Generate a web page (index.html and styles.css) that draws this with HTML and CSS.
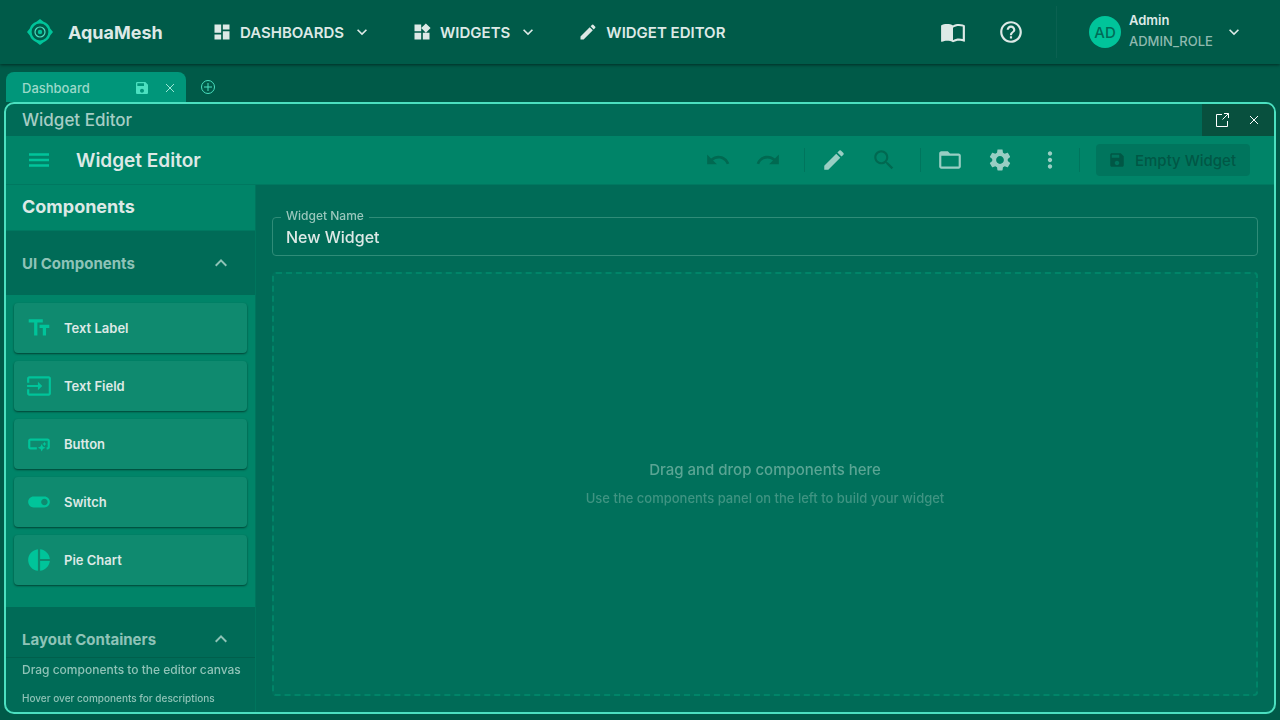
FILE: index.html
```html
<!DOCTYPE html>
<html lang="en">
<head>
<meta charset="utf-8">
<meta name="viewport" content="width=device-width, initial-scale=1">
<title>AquaMesh – Widget Editor</title>
<link rel="stylesheet" href="styles.css">
</head>
<body>
<div class="app">
  <header class="topbar">
    <a class="brand" href="#">
      <svg class="brand-logo" viewBox="0 0 26 26" aria-hidden="true">
        <path fill="#00c49a" fill-rule="evenodd" d="M13 0l3.6 2.8a10.6 10.6 0 0 1 6.6 6.6L26 13l-2.8 3.6a10.6 10.6 0 0 1-6.6 6.6L13 26l-3.6-2.8a10.6 10.6 0 0 1-6.6-6.6L0 13l2.8-3.6a10.6 10.6 0 0 1 6.6-6.6zM13 4.6a8.4 8.4 0 1 0 0 16.8a8.4 8.4 0 1 0 0-16.8z"/>
        <circle cx="13" cy="13" r="5" fill="none" stroke="#4be0c0" stroke-width="1.2"/>
        <circle cx="13" cy="13" r="2.2" fill="#00c49a"/>
      </svg>
      <span>AquaMesh</span>
    </a>
    <nav class="nav">
      <button class="nav-item" type="button">
        <svg class="i20" viewBox="0 0 24 24"><path d="M3 13h8V3H3v10zm0 8h8v-6H3v6zm10 0h8V11h-8v10zm0-18v6h8V3h-8z"/></svg>
        <span>DASHBOARDS</span>
        <svg class="i20 chev" viewBox="0 0 24 24"><path d="M16.59 8.59 12 13.17 7.41 8.59 6 10l6 6 6-6z"/></svg>
      </button>
      <button class="nav-item" type="button">
        <svg class="i20" viewBox="0 0 24 24"><path d="M13 13v8h8v-8h-8zM3 21h8v-8H3v8zM3 3v8h8V3H3zm13.66-1.31L11 7.34 16.66 13l5.66-5.66-5.66-5.65z"/></svg>
        <span>WIDGETS</span>
        <svg class="i20 chev" viewBox="0 0 24 24"><path d="M16.59 8.59 12 13.17 7.41 8.59 6 10l6 6 6-6z"/></svg>
      </button>
      <button class="nav-item" type="button">
        <svg class="i20" viewBox="0 0 24 24"><path d="M3 17.25V21h3.75L17.81 9.94l-3.75-3.75L3 17.25zM20.71 7.04c.39-.39.39-1.02 0-1.41l-2.34-2.34a1 1 0 0 0-1.41 0l-1.83 1.83 3.75 3.75 1.83-1.83z"/></svg>
        <span>WIDGET EDITOR</span>
      </button>
    </nav>
    <div class="top-actions">
      <button class="top-icon" type="button" aria-label="Documentation">
        <svg class="i26" viewBox="0 0 24 24"><path d="M21 5c-1.11-.35-2.33-.5-3.5-.5-1.95 0-4.05.4-5.5 1.5-1.45-1.1-3.55-1.5-5.5-1.5S2.45 4.9 1 6v14.65c0 .25.25.5.5.5.1 0 .15-.05.25-.05C3.1 20.45 5.05 20 6.5 20c1.95 0 4.05.4 5.5 1.5 1.35-.85 3.8-1.5 5.5-1.5 1.65 0 3.35.3 4.75 1.05.1.05.15.05.25.05.25 0 .5-.25.5-.5V6c-.6-.45-1.25-.75-2-1zm0 13.5c-1.1-.35-2.3-.5-3.5-.5-1.7 0-4.15.65-5.5 1.5V8c1.35-.85 3.8-1.5 5.5-1.5 1.2 0 2.4.15 3.5.5v11.5z"/></svg>
      </button>
      <button class="top-icon" type="button" aria-label="Help">
        <svg class="i26" viewBox="0 0 24 24"><path d="M11 18h2v-2h-2v2zm1-16C6.48 2 2 6.48 2 12s4.48 10 10 10 10-4.48 10-10S17.52 2 12 2zm0 18c-4.41 0-8-3.59-8-8s3.59-8 8-8 8 3.59 8 8-3.59 8-8 8zm0-14c-2.21 0-4 1.79-4 4h2c0-1.1.9-2 2-2s2 .9 2 2c0 2-3 1.75-3 5h2c0-2.25 3-2.5 3-5 0-2.21-1.79-4-4-4z"/></svg>
      </button>
      <button class="account" type="button">
        <span class="avatar">AD</span>
        <span class="account-text"><span class="account-name">Admin</span><span class="account-role">ADMIN_ROLE</span></span>
        <svg class="i20" viewBox="0 0 24 24"><path d="M16.59 8.59 12 13.17 7.41 8.59 6 10l6 6 6-6z"/></svg>
      </button>
    </div>
  </header>

  <div class="tabs">
    <div class="tab">
      <span class="tab-title">Dashboard</span>
      <button class="tab-btn" type="button" aria-label="Save dashboard"><svg class="i16" viewBox="0 0 24 24"><path d="M17 3H5c-1.11 0-2 .9-2 2v14c0 1.1.89 2 2 2h14c1.1 0 2-.9 2-2V7l-4-4zm-5 16c-1.66 0-3-1.34-3-3s1.34-3 3-3 3 1.34 3 3-1.34 3-3 3zm3-10H5V5h10v4z"/></svg></button>
      <button class="tab-btn tab-close" type="button" aria-label="Close dashboard"><svg class="i16" viewBox="0 0 16 16"><path class="line" d="M4 4l8 8M12 4l-8 8"/></svg></button>
    </div>
    <button class="tab-add" type="button" aria-label="Add dashboard"><svg class="i16" viewBox="0 0 16 16"><circle class="line" cx="8" cy="8" r="6.5"/><path class="line" d="M8 4v8M4 8h8"/></svg></button>
  </div>

  <main class="window">
    <div class="titlebar">
      <span class="titlebar-text">Widget Editor</span>
      <div class="window-btns">
        <button type="button" aria-label="Open in new window"><svg class="i16" viewBox="0 0 16 16"><path class="line" d="M8 2.5H2.500V14.500H13.500V9M10 1.500H14.500V6M14.500 1.500L8.500 7.500"/></svg></button>
        <button type="button" aria-label="Close"><svg class="i16" viewBox="0 0 16 16"><path class="line" d="M4 4l8 8M12 4l-8 8"/></svg></button>
      </div>
    </div>

    <div class="toolbar">
      <button class="tool menu" type="button" aria-label="Toggle components"><svg class="i24" viewBox="0 0 24 24"><path d="M2 5.300h20v2.400H2zM2 10.800h20v2.400H2zM2 16.300h20v2.400H2z"/></svg></button>
      <h1 class="toolbar-title">Widget Editor</h1>
      <div class="tool-group">
        <button class="tool" type="button" disabled aria-label="Undo"><svg class="i26" viewBox="0 0 24 24"><path d="M12.5 8c-2.65 0-5.05.99-6.9 2.6L2 7v9h9l-3.62-3.62c1.39-1.16 3.16-1.88 5.12-1.88 3.54 0 6.55 2.31 7.6 5.5l2.37-.78C21.08 11.03 17.15 8 12.5 8z"/></svg></button>
        <button class="tool" type="button" disabled aria-label="Redo"><svg class="i26" viewBox="0 0 24 24"><path d="M18.4 10.6C16.55 8.99 14.15 8 11.5 8c-4.65 0-8.58 3.03-9.96 7.22L3.9 16c1.05-3.19 4.05-5.5 7.6-5.5 1.95 0 3.73.72 5.12 1.88L13 16h9V7l-3.6 3.6z"/></svg></button>
      </div>
      <span class="divider"></span>
      <div class="tool-group">
        <button class="tool" type="button" aria-label="Edit mode"><svg class="i26" viewBox="0 0 24 24"><path d="M3 17.25V21h3.75L17.81 9.94l-3.75-3.75L3 17.25zM20.71 7.04c.39-.39.39-1.02 0-1.41l-2.34-2.34a1 1 0 0 0-1.41 0l-1.83 1.83 3.75 3.75 1.83-1.83z"/></svg></button>
        <button class="tool" type="button" disabled aria-label="Search"><svg class="i26" viewBox="0 0 24 24"><path d="M15.500 14h-.79l-.28-.27C15.410 12.590 16 11.110 16 9.500 16 5.910 13.090 3 9.500 3S3 5.910 3 9.500 5.910 16 9.500 16c1.610 0 3.090-.59 4.230-1.570l.27.28v.79l5 4.990L20.490 19l-4.990-5zm-6 0C7.010 14 5 11.990 5 9.500S7.010 5 9.500 5 14 7.010 14 9.500 11.990 14 9.500 14z"/></svg></button>
      </div>
      <span class="divider"></span>
      <div class="tool-group">
        <button class="tool" type="button" aria-label="Open widget"><svg class="i26" viewBox="0 0 24 24"><path d="M20 6h-8l-2-2H4c-1.100 0-1.990.9-1.990 2L2 18c0 1.100.9 2 2 2h16c1.100 0 2-.9 2-2V8c0-1.100-.9-2-2-2zm0 12H4V8h16v10z"/></svg></button>
        <button class="tool" type="button" aria-label="Settings"><svg class="i26" viewBox="0 0 24 24"><path d="M19.140 12.940c.04-.3.06-.61.06-.94 0-.32-.02-.64-.07-.94l2.030-1.580c.18-.14.23-.41.12-.61l-1.920-3.320c-.12-.22-.37-.29-.59-.22l-2.390.96c-.5-.38-1.030-.7-1.620-.94l-.36-2.540c-.04-.24-.24-.41-.48-.41h-3.840c-.24 0-.43.17-.47.41l-.36 2.540c-.59.24-1.130.57-1.620.94l-2.390-.96c-.22-.08-.47 0-.59.22L2.740 8.870c-.12.21-.08.47.12.61l2.030 1.580c-.05.3-.09.63-.09.94s.02.64.07.94l-2.030 1.580c-.18.14-.23.41-.12.61l1.920 3.320c.12.22.37.29.59.22l2.390-.96c.5.38 1.030.7 1.620.94l.36 2.540c.05.24.24.41.48.41h3.840c.24 0 .44-.17.47-.41l.36-2.540c.59-.24 1.130-.56 1.620-.94l2.390.96c.22.08.47 0 .59-.22l1.920-3.320c.12-.22.07-.47-.12-.61l-2.010-1.580zM12 15.600c-1.980 0-3.600-1.620-3.600-3.600s1.620-3.600 3.600-3.600 3.600 1.620 3.600 3.600-1.620 3.600-3.600 3.600z"/></svg></button>
        <button class="tool" type="button" aria-label="More"><svg class="i26" viewBox="0 0 24 24"><path d="M12 8c1.100 0 2-.9 2-2s-.9-2-2-2-2 .9-2 2 .9 2 2 2zm0 2c-1.100 0-2 .9-2 2s.9 2 2 2 2-.9 2-2-.9-2-2-2zm0 6c-1.100 0-2 .9-2 2s.9 2 2 2 2-.9 2-2-.9-2-2-2z"/></svg></button>
      </div>
      <span class="divider divider-tight"></span>
      <button class="save" type="button" disabled><svg class="i18" viewBox="0 0 24 24"><path d="M17 3H5c-1.11 0-2 .9-2 2v14c0 1.1.89 2 2 2h14c1.1 0 2-.9 2-2V7l-4-4zm-5 16c-1.66 0-3-1.34-3-3s1.34-3 3-3 3 1.34 3 3-1.34 3-3 3zm3-10H5V5h10v4z"/></svg><span>Empty Widget</span></button>
    </div>

    <div class="workspace">
      <aside class="sidebar">
        <h2 class="side-title">Components</h2>
        <div class="side-scroll">
          <button class="section" type="button" aria-expanded="true"><span>UI Components</span><svg class="i24" viewBox="0 0 24 24"><path d="m12 8-6 6 1.410 1.410L12 10.830l4.590 4.580L18 14z"/></svg></button>
          <ul class="cards">
            <li class="card"><svg class="i26" viewBox="0 0 24 24"><path d="M2.500 4v3h5v12h3V7h5V4h-13zm19 5h-9v3h3v7h3v-7h3V9z"/></svg><span>Text Label</span></li>
            <li class="card"><svg class="i26" viewBox="0 0 24 24"><path d="M21 3.010H3c-1.100 0-2 .9-2 2V9h2V4.990h18v14.030H3V15H1v4.010c0 1.100.9 1.980 2 1.980h18c1.100 0 2-.88 2-1.980v-14c0-1.110-.9-2-2-2zM11 16l4-4-4-4v3H1v2h10v3z"/></svg><span>Text Field</span></li>
            <li class="card"><svg class="i26" viewBox="0 0 24 24"><path d="M22 9v6c0 1.100-.9 2-2 2h-1v-2h1V9H4v6h6v2H4c-1.100 0-2-.9-2-2V9c0-1.100.9-2 2-2h16c1.100 0 2 .9 2 2zm-7.500 10 1.090-2.410L18 15.500l-2.410-1.090L14.500 12l-1.090 2.410L11 15.500l2.410 1.090L14.500 19zm2.500-5 .62-1.380L19 12l-1.380-.62L17 10l-.62 1.380L15 12l1.380.62L17 14z"/></svg><span>Button</span></li>
            <li class="card"><svg class="i26" viewBox="0 0 24 24"><path d="M17 7H7c-2.760 0-5 2.240-5 5s2.240 5 5 5h10c2.760 0 5-2.240 5-5s-2.240-5-5-5zm0 8c-1.660 0-3-1.340-3-3s1.340-3 3-3 3 1.340 3 3-1.340 3-3 3z"/></svg><span>Switch</span></li>
            <li class="card"><svg class="i26" viewBox="0 0 24 24"><path d="M11 2v20c-5.070-.5-9-4.790-9-10s3.930-9.500 9-10zm2.030 0v8.990H22c-.47-4.740-4.240-8.520-8.970-8.990zm0 11.010V22c4.740-.47 8.500-4.250 8.970-8.990h-8.970z"/></svg><span>Pie Chart</span></li>
          </ul>
          <button class="section" type="button" aria-expanded="true"><span>Layout Containers</span><svg class="i24" viewBox="0 0 24 24"><path d="m12 8-6 6 1.410 1.410L12 10.830l4.590 4.580L18 14z"/></svg></button>
        </div>
        <div class="side-foot">
          <p class="foot-main">Drag components to the editor canvas</p>
          <p class="foot-sub">Hover over components for descriptions</p>
        </div>
      </aside>
      <section class="canvas">
        <div class="field">
          <label for="widget-name">Widget Name</label>
          <input id="widget-name" type="text" value="New Widget">
        </div>
        <div class="drop">
          <p class="drop-main">Drag and drop components here</p>
          <p class="drop-sub">Use the components panel on the left to build your widget</p>
        </div>
      </section>
    </div>
  </main>
</div>
</body>
</html>
```
FILE: styles.css
```css
* { box-sizing: border-box; }

body {
  margin: 0;
  background: #005a48;
  color: #dde9e6;
  font-family: Inter, "Noto Sans", sans-serif;
  font-size: 14px;
  font-weight: 500;
}

h1, h2, p, ul { margin: 0; padding: 0; }
button {
  border: 0;
  padding: 0;
  background: none;
  color: inherit;
  font: inherit;
  cursor: pointer;
}
svg { display: block; fill: currentColor; flex: none; }
.line { fill: none; stroke: currentColor; stroke-width: 1; }
.i16 { width: 16px; height: 16px; }
.i18 { width: 18px; height: 18px; }
.i20 { width: 20px; height: 20px; }
.i24 { width: 24px; height: 24px; }
.i26 { width: 26px; height: 26px; }

.app { height: 100vh; display: flex; flex-direction: column; }

.topbar {
  flex: none;
  height: 64px;
  display: flex;
  align-items: center;
  padding: 0 24px 0 27px;
  background: #005b49;
  box-shadow: 0 1px 3px rgba(0, 0, 0, 0.5);
}
.brand {
  display: flex;
  align-items: center;
  gap: 15px;
  min-width: 185px;
  color: inherit;
  text-decoration: none;
  font-size: 18px;
  font-weight: 700;
}
.brand-logo { width: 26px; height: 26px; }
.nav { display: flex; gap: 40px; }
.nav-item {
  display: flex;
  align-items: center;
  gap: 8px;
  font-size: 15px;
  font-weight: 600;
}
.top-actions { margin-left: auto; display: flex; align-items: center; }
.top-icon { width: 58px; display: grid; place-items: center; }
.account {
  display: flex;
  align-items: center;
  height: 52px;
  margin-left: 16px;
  padding: 0 12px 0 32px;
  border-left: 1px solid #0b6151;
  text-align: left;
}
.avatar {
  width: 32px;
  height: 32px;
  display: grid;
  place-items: center;
  border-radius: 50%;
  background: #00c49a;
  color: #006b57;
  font-size: 15px;
}
.account-text {
  display: flex;
  flex-direction: column;
  min-width: 103px;
  padding: 0 8px 3px;
}
.account-name { font-size: 13px; line-height: 20px; font-weight: 600; }
.account-role { font-size: 13px; line-height: 22px; color: #8fb9af; }

.tabs { flex: none; display: flex; padding: 8px 6px 0; height: 38px; }
.tab {
  width: 180px;
  display: flex;
  align-items: center;
  gap: 12px;
  padding: 2px 8px 0 16px;
  border-radius: 8px 8px 0 0;
  background: #00967a;
  color: #9bd9c9;
}
.tab-title { flex: 1; font-size: 13px; }
.tab-btn { color: #4be0c0; }
.tab-close { color: #9be6d5; }
.tab-add { padding: 0 14px; color: #4be0c0; }

.window {
  flex: 1;
  min-height: 0;
  display: flex;
  flex-direction: column;
  margin: 0 4px 6px;
  border: 2px solid #4be0c0;
  border-radius: 10px;
  overflow: hidden;
  background: #006b57;
}
.titlebar {
  flex: none;
  height: 32px;
  display: flex;
  justify-content: space-between;
  align-items: center;
  padding-left: 16px;
}
.titlebar-text { font-size: 17px; color: #a6cdc4; }
.window-btns {
  height: 32px;
  display: flex;
  padding: 0 4px;
  background: #08503e;
  color: #fff;
}
.window-btns button { width: 32px; display: grid; place-items: center; }

.toolbar {
  flex: none;
  height: 49px;
  display: flex;
  align-items: center;
  padding: 0 24px 0 13px;
  background: #008468;
  border-bottom: 1px solid #007860;
}
.tool {
  width: 40px;
  height: 40px;
  display: grid;
  place-items: center;
  color: #99cec3;
}
.tool:disabled { color: #006951; }
.tool.menu { color: #00c49a; }
.toolbar-title { flex: 1; padding-left: 17px; font-size: 19px; font-weight: 600; }
.tool-group { display: flex; gap: 10px; }
.divider { width: 1px; height: 24px; margin: 0 9px 0 16px; background: #00755d; }
.divider-tight { margin-left: 9px; }
.save {
  display: flex;
  align-items: center;
  gap: 9px;
  height: 32px;
  margin-left: 7px;
  padding: 0 14px 0 12px;
  border-radius: 4px;
  background: #00755d;
  color: #005745;
  font-size: 15px;
}

.workspace { flex: 1; min-height: 0; display: flex; }
.sidebar {
  flex: none;
  width: 250px;
  display: flex;
  flex-direction: column;
  border-right: 1px solid #00755d;
}
.side-title {
  flex: none;
  padding: 0 16px 1px;
  background: #008468;
  border-bottom: 1px solid #007860;
  font-size: 18px;
  line-height: 44px;
  font-weight: 700;
}
.side-scroll {
  flex: 1;
  min-height: 0;
  overflow-y: auto;
  scrollbar-width: none;
  background: #008468;
}
.section {
  width: 100%;
  height: 64px;
  display: flex;
  justify-content: space-between;
  align-items: center;
  padding: 0 22px 0 16px;
  background: #006b57;
  color: #8fc3b7;
  font-size: 15px;
  font-weight: 700;
}
.cards {
  display: flex;
  flex-direction: column;
  gap: 8px;
  padding: 8px 8px 22px;
  list-style: none;
}
.card {
  height: 50px;
  display: flex;
  align-items: center;
  gap: 12px;
  padding: 0 12px;
  border-radius: 4px;
  background: #0f8a6f;
  box-shadow: 0 1px 2px rgba(0, 40, 30, 0.7);
  font-size: 13px;
  font-weight: 600;
}
.card svg { color: #00c49a; }
.side-foot {
  flex: none;
  height: 55px;
  padding: 0 16px;
  border-top: 1px solid #005f4c;
  color: #8fc3b7;
  white-space: nowrap;
}
.foot-main { font-size: 12px; line-height: 23px; }
.foot-sub { padding-top: 8px; font-size: 10px; line-height: 18px; }

.canvas {
  flex: 1;
  min-width: 0;
  display: flex;
  flex-direction: column;
  gap: 16px;
  padding: 32px 16px 16px;
}
.field { position: relative; }
.field label {
  position: absolute;
  top: -8px;
  left: 9px;
  padding: 0 5px;
  background: #006b57;
  color: #99c7bc;
  font-size: 12px;
  line-height: 14px;
}
.field input {
  display: block;
  width: 100%;
  height: 39px;
  padding: 0 13px;
  border: 1px solid #2f8c78;
  border-radius: 4px;
  background: transparent;
  color: #dde9e6;
  font: inherit;
  font-size: 16px;
}
.drop {
  flex: 1;
  display: flex;
  flex-direction: column;
  align-items: center;
  justify-content: center;
  gap: 4px;
  border: 2px dashed #008468;
  border-radius: 4px;
  background: #00705b;
  text-align: center;
}
.drop-main { font-size: 15px; line-height: 24px; color: #5aa594; }
.drop-sub { font-size: 13px; line-height: 24px; color: #3f9482; }
```
